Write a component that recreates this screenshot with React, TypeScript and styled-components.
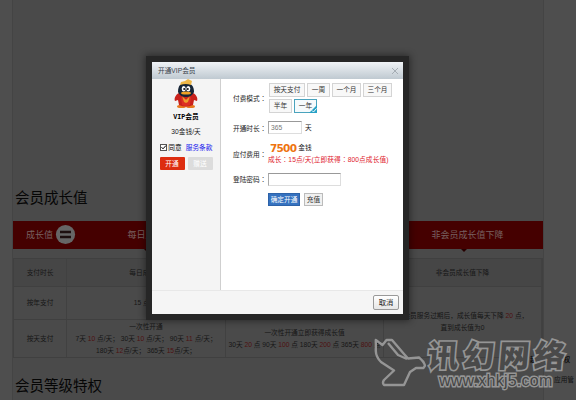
import React from "react";
import styled, { createGlobalStyle } from "styled-components";

const Global = createGlobalStyle`
  * { box-sizing: border-box; }
  body { margin: 0; overflow: hidden; background: #4f4f4f; }
  button, input { font: inherit; margin: 0; padding: 0; border-radius: 0; outline: none; }
`;

const Page = styled.div`
  position: relative;
  width: 576px;
  height: 400px;
  overflow: hidden;
  background: #4e4e4e;
  font-family: "Liberation Sans", "Noto Sans CJK SC", sans-serif;
  font-size: 6.7px;
  line-height: 12px;
  color: #161616;
  white-space: nowrap;
`;

const Main = styled.main`
  width: 532px;
  height: 400px;
  margin-left: 12px;
  padding: 186px 0 0;
  background: #4a4a4a;
  border-left: 1px solid #444;
  border-right: 1px solid #444;
`;

const Heading = styled.h2`
  margin: 0;
  padding-left: 2px;
  height: 24px;
  font-size: 14.5px;
  font-weight: 400;
  line-height: 24px;
  color: #060606;
`;

const Banner = styled.div`
  display: grid;
  grid-template-columns: 53px 159px 158px 1fr;
  align-items: center;
  height: 28px;
  margin-top: 11px;
  background: #450000;
  color: #776060;
  font-size: 9px;
  text-align: center;
`;

const BannerCell = styled.div<{ $shift?: number }>`
  position: relative;
  height: 28px;
  padding-left: ${(p) => p.$shift ?? 0}px;
  line-height: 29px;
`;

const Notch = styled.i`
  position: absolute;
  left: calc(50% - 2px);
  top: 28px;
  border: 3px solid transparent;
  border-top-color: #260000;
`;

const Equals = styled.svg`
  position: absolute;
  left: 42px;
  top: 3px;
`;

const Table = styled.div`
  display: grid;
  grid-template-columns: 53px 159px 158px 1fr;
  grid-template-rows: 28px 33px 38px;
  margin-top: 9px;
  margin-bottom: 16px;
  border: 1px solid #404040;
  border-bottom: 0;
  text-align: center;
`;

const Cell = styled.div<{ $head?: boolean; $tall?: boolean }>`
  display: flex;
  flex-direction: column;
  align-items: center;
  justify-content: center;
  grid-row: ${(p) => (p.$tall ? "span 2" : "auto")};
  overflow: hidden;
  background: ${(p) => (p.$head ? "#464646" : "transparent")};
  border-right: 1px solid #414141;
  border-bottom: 1px solid #404040;
`;

const Em = styled.span`
  color: #4e1010;
`;

const Dialog = styled.section`
  position: absolute;
  left: 146px;
  top: 56px;
  width: 263px;
  height: 264px;
  padding: 6px;
  background: #262626;
  box-shadow: 0 0 7px 1px rgba(0, 0, 0, 0.45);
  color: #1a1a1a;
  display: flex;
  flex-direction: column;
`;

const TitleBar = styled.header`
  display: flex;
  justify-content: space-between;
  align-items: center;
  height: 17px;
  padding: 0 4px 0 6px;
  background: linear-gradient(#f0f3f6, #bfc9d1);
  color: #39414a;
`;

const Body = styled.div`
  display: flex;
  height: 211px;
`;

const Side = styled.aside`
  width: 69px;
  background: #f4f4f4;
  border-right: 1px solid #cfcfcf;
  display: flex;
  flex-direction: column;
  align-items: center;
`;

const Name = styled.b`
  margin-top: 2px;
  height: 15px;
  font-family: "Liberation Mono", "Noto Sans CJK SC", monospace;
  color: #000;
`;

const Agree = styled.div`
  display: flex;
  align-items: center;
  margin-top: 4px;
  height: 11px;
  color: #000;
`;

const Terms = styled.a`
  margin-left: 4px;
  color: #1a1aee;
`;

const SideButtons = styled.div`
  display: flex;
  gap: 3px;
  margin-top: 4px;
`;

const SideButton = styled.button<{ $off?: boolean }>`
  width: 25px;
  height: 13px;
  border: 0;
  border-radius: 1px;
  line-height: 13px;
  color: #fff;
  background: ${(p) => (p.$off ? "#dcdcdc" : "#dd2d10")};
`;

const Form = styled.div`
  flex: 1;
  padding: 3px 0 0 12px;
  background: #fff;
`;

const Row = styled.div<{ $h: number }>`
  display: grid;
  grid-template-columns: 35px 1fr;
  align-items: center;
  height: ${(p) => p.$h}px;
`;

const Label = styled.span`
  font-family: "Noto Sans CJK TC", sans-serif;
`;

const Options = styled.div`
  display: flex;
  flex-wrap: wrap;
  gap: 2px;
  width: 132px;
  margin-left: 1px;
`;

const Option = styled.button<{ $w: number; $on?: boolean }>`
  position: relative;
  width: ${(p) => p.$w}px;
  height: 14px;
  line-height: 12px;
  border: 1px solid ${(p) => (p.$on ? "#4aa3bd" : "#d4d4d4")};
  background: ${(p) => (p.$on ? "#f5fafc" : "#f8f8f8")};
  color: #333;
`;

const Tick = styled.svg`
  position: absolute;
  right: -1px;
  bottom: -1px;
`;

const Inline = styled.div`
  display: flex;
  align-items: center;
`;

const Field = styled.input<{ $w: number }>`
  width: ${(p) => p.$w}px;
  height: 13px;
  padding-left: 2px;
  border: 1px solid #ddd;
  border-top-color: #999;
  border-left-color: #aaa;
  background: #fff;
  color: #777;
`;

const Unit = styled.span`
  margin-left: 3px;
`;

const Price = styled.b`
  margin: 0 2px 0 2px;
  font-family: "DejaVu Sans", sans-serif;
  font-size: 10.5px;
  letter-spacing: -0.75px;
  color: #ee7410;
`;

const Growth = styled.div`
  font-family: "Liberation Sans", "Noto Sans CJK TC", sans-serif;
  letter-spacing: 0.09px;
  color: #e0202c;
`;

const Action = styled.button<{ $primary?: boolean }>`
  width: ${(p) => (p.$primary ? 32 : 19)}px;
  height: 13px;
  margin-right: 4px;
  border: 1px solid ${(p) => (p.$primary ? "#2d62a8" : "#bbb")};
  background: ${(p) => (p.$primary ? "#3572c0" : "#f0f0f0")};
  color: ${(p) => (p.$primary ? "#fff" : "#333")};
  line-height: 11px;
`;

const Footer = styled.footer`
  display: flex;
  align-items: center;
  justify-content: flex-end;
  height: 24px;
  padding-right: 4px;
  background: #f5f5f5;
  border-top: 1px solid #e8e8e8;
`;

const Cancel = styled.button`
  width: 26px;
  height: 15px;
  border: 1px solid #999;
  border-radius: 2px;
  background: linear-gradient(#fff, #e6e6e6);
  color: #222;
  font-size: 7.3px;
  line-height: 13px;
`;

const SideNote = styled.div`
  position: absolute;
  left: 530px;
  top: 354px;
  color: #111;
`;

const NoteLine = styled.div<{ $indent: number }>`
  height: 20px;
  padding-left: ${(p) => p.$indent}px;
`;

const Watermark = styled.div`
  position: absolute;
  left: 374px;
  top: 336px;
  display: flex;
`;

const MarkName = styled.div`
  height: 36px;
  margin-left: 2px;
  font-family: "Noto Sans CJK SC", sans-serif;
  font-size: 31px;
  font-weight: 900;
  line-height: 36px;
  letter-spacing: 4.5px;
  color: #4a4a4a;
  -webkit-text-stroke: 3.4px #959595;
  paint-order: stroke fill;
  transform: skewX(-5deg);
`;

const MarkUrl = styled.div`
  padding-left: 13px;
  font-size: 16px;
  line-height: 18px;
  letter-spacing: 0.25px;
  color: #444;
  -webkit-text-stroke: 2.8px #959595;
  paint-order: stroke fill;
`;

function Penguin() {
  return (
    <svg width="26" height="30" viewBox="0 0 26 30">
      <ellipse cx="8.5" cy="27.4" rx="4.5" ry="1.7" fill="#e8791f" />
      <ellipse cx="17.5" cy="27.4" rx="4.5" ry="1.7" fill="#e8791f" />
      <path d="M6 14C2 16 1 20 2 22l3-1 1 5q7 3 14 0l1-5 3 1c1-2 0-6-4-8z" fill="#c9211c" />
      <path d="M8 18q5 4 10 0l-1 8q-4 2-8 0z" fill="#dd3022" />
      <path d="M9 17l4 4 4-4-2 6-2 1-2-1z" fill="#ee9c2b" />
      <path d="M5 13C5 6 8 4 13 4s8 3 8 9q-2 5-8 5t-8-5z" fill="#172638" />
      <path d="M7 6l1-3 4-1 3-2 4 2-1 4q-5-2-11 0z" fill="#eeb848" />
      <ellipse cx="10.7" cy="9.8" rx="2" ry="2.7" fill="#fff" />
      <ellipse cx="15.3" cy="9.8" rx="2" ry="2.7" fill="#fff" />
      <circle cx="11.2" cy="10" r="1" fill="#111" />
      <circle cx="14.8" cy="10" r="1" fill="#111" />
      <ellipse cx="13" cy="14" rx="5" ry="1.6" fill="#f0a224" />
    </svg>
  );
}

const options = [
  { label: "按天支付", w: 36 },
  { label: "一周", w: 23 },
  { label: "一个月", w: 29 },
  { label: "三个月", w: 29 },
  { label: "半年", w: 23 },
  { label: "一年", w: 23, on: true },
];

export default function App() {
  return (
    <>
      <Global />
      <Page>
        <Main>
          <Heading>会员成长值</Heading>
          <Banner>
            <BannerCell>
              成长值
              <Equals width="21" height="21" viewBox="0 0 21 21">
                <circle cx="10.5" cy="10.5" r="9.6" fill="#666" />
                <path d="M5 8h11M5 13h11" stroke="#1e1010" strokeWidth="2.6" />
              </Equals>
            </BannerCell>
            <BannerCell $shift={9}>每日成长值<Notch /></BannerCell>
            <BannerCell $shift={9}>开通成长值<Notch /></BannerCell>
            <BannerCell $shift={9}>非会员成长值下降<Notch /></BannerCell>
          </Banner>
          <Table>
            <Cell $head>支付时长</Cell>
            <Cell $head>每日成长值</Cell>
            <Cell $head>开通成长值</Cell>
            <Cell $head>非会员成长值下降</Cell>
            <Cell>按年支付</Cell>
            <Cell><span>15 点/天</span></Cell>
            <Cell />
            <Cell $tall>
              <span>若会员服务过期后，成长值每天下降 <Em>20</Em> 点，</span>
              <span>直到成长值为0</span>
            </Cell>
            <Cell>按天支付</Cell>
            <Cell>
              <span>一次性开通</span>
              <span>7天 <Em>10</Em> 点/天； 30天 <Em>10</Em> 点/天； 90天 <Em>11</Em> 点/天；</span>
              <span>180天 <Em>12</Em>点/天； 365天 <Em>15</Em>点/天；</span>
            </Cell>
            <Cell>
              <span>一次性开通立即获得成长值</span>
              <span>30天 <Em>20</Em> 点 90天 <Em>100</Em> 点 180天 <Em>200</Em> 点 365天 <Em>800</Em> 点</span>
            </Cell>
          </Table>
          <Heading>会员等级特权</Heading>
        </Main>
        <SideNote>
          <NoteLine $indent={0}><b>超级会员特权</b></NoteLine>
          <NoteLine $indent={24}>应用管</NoteLine>
        </SideNote>

        <Dialog>
          <TitleBar>
            开通VIP会员
            <svg width="8" height="8" viewBox="0 0 8 8">
              <path d="M1 1l6 6M7 1L1 7" stroke="#a5adb4" />
            </svg>
          </TitleBar>
          <Body>
            <Side>
              <Penguin />
              <Name>VIP会员</Name>
              <span>30金钱/天</span>
              <Agree>
                <svg width="7" height="7" viewBox="0 0 7 7">
                  <rect x=".5" y=".5" width="6" height="6" fill="#fff" stroke="#555" />
                  <path d="M1.5 3.2l1.5 1.6 3-3.3" fill="none" stroke="#000" />
                </svg>
                &nbsp;同意<Terms>服务条款</Terms>
              </Agree>
              <SideButtons>
                <SideButton>开通</SideButton>
                <SideButton $off>赠送</SideButton>
              </SideButtons>
            </Side>
            <Form>
              <Row $h={32}>
                <Label>付费模式：</Label>
                <Options>
                  {options.map((o) => (
                    <Option key={o.label} $w={o.w} $on={o.on}>
                      {o.label}
                      {o.on && (
                        <Tick width="8" height="8" viewBox="0 0 8 8">
                          <path d="M8 0v8H0z" fill="#27a1c6" />
                          <path d="M3 5.5L4.5 7 7.5 3.5" fill="none" stroke="#fff" />
                        </Tick>
                      )}
                    </Option>
                  ))}
                </Options>
              </Row>
              <Row $h={27}>
                <Label>开通时长：</Label>
                <Inline><Field $w={34} defaultValue="365" /><Unit>天</Unit></Inline>
              </Row>
              <Row $h={25}>
                <Label>应付费用：</Label>
                <div>
                  <Inline><Price>7500</Price>金钱</Inline>
                  <Growth>成长：15点/天(立即获得：800点成长值)</Growth>
                </div>
              </Row>
              <Row $h={26}>
                <Label>登陆密码：</Label>
                <Field $w={73} />
              </Row>
              <Row $h={14}>
                <span />
                <Inline><Action $primary>确定开通</Action><Action>充值</Action></Inline>
              </Row>
            </Form>
          </Body>
          <Footer><Cancel>取消</Cancel></Footer>
        </Dialog>

        <Watermark>
          <svg width="52" height="54" viewBox="0 0 52 54">
            <path
              d="M1.8 4L8.5 9 12.5 4H18L30 18l4 4.5 11-1q5 4 6 8l-1.5 2.5H42l-6 4-6 13H10q-2-2 0-5l10-9.5L7 26Q2 21 1.8 15zM14 7l10 12 9 4"
              fill="none"
              stroke="#959595"
              strokeWidth="2.4"
              strokeLinejoin="round"
            />
          </svg>
          <div>
            <MarkName>讯幻网络</MarkName>
            <MarkUrl>www.xhkj5.com</MarkUrl>
          </div>
        </Watermark>
      </Page>
    </>
  );
}
